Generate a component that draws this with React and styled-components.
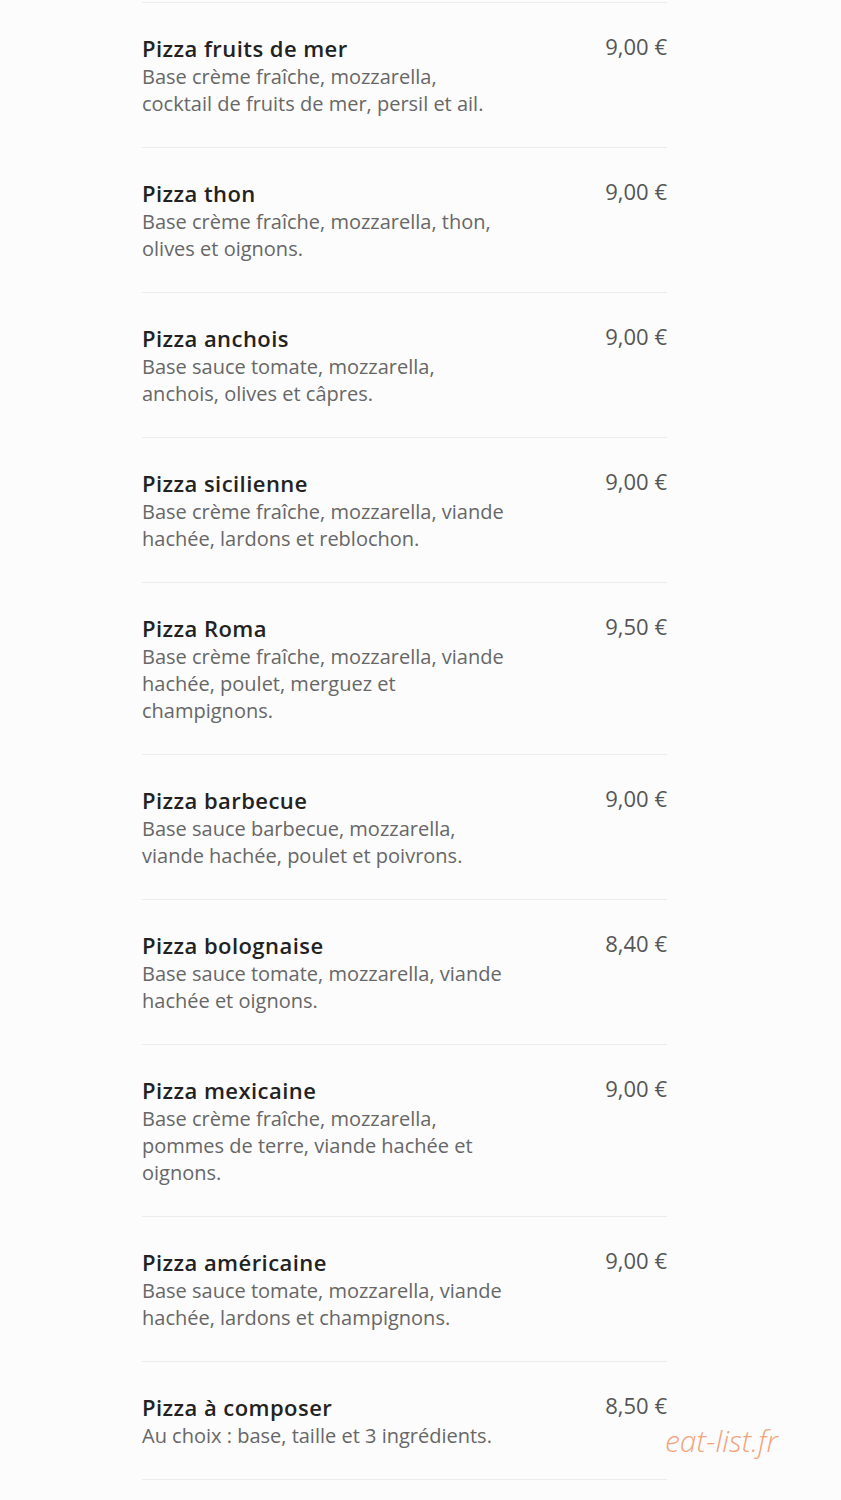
import React from "react";
import styled, { createGlobalStyle } from "styled-components";

const Global = createGlobalStyle`
  html, body { margin: 0; padding: 0; background: #fcfcfc; }
  body { font-family: "Open Sans", "Noto Sans", sans-serif; }
`;

const Page = styled.div`
  position: relative;
  width: 841px;
  min-height: 1500px;
  display: flex;
  justify-content: flex-start;
  padding-left: 142px;
  box-sizing: border-box;
`;

const Menu = styled.ul`
  list-style: none;
  margin: 0;
  padding: 2px 0 0;
  width: 525px;
`;

const Item = styled.li`
  display: flex;
  justify-content: space-between;
  align-items: flex-start;
  border-top: 1px solid #ececec;
  padding: 30px 0 30px;
  &:last-child { border-bottom: 1px solid #ececec; }
`;

const Info = styled.div`
  display: flex;
  flex-direction: column;
`;

const Name = styled.h3`
  margin: 0;
  font-size: 22px;
  line-height: 30px;
  font-weight: 600;
  letter-spacing: 0.45px;
  color: #222;
`;

const Desc = styled.p`
  margin: 0;
  font-size: 20px;
  line-height: 27px;
  color: #676767;
  span { display: block; }
`;

const Price = styled.div`
  font-size: 22px;
  line-height: 26px;
  color: #555;
  white-space: nowrap;
`;

const Watermark = styled.div`
  position: absolute;
  left: 665px;
  top: 1420px;
  font-size: 30px;
  font-style: italic;
  font-weight: 300;
  color: #f2a47c;
`;

const items = [
  ["Pizza fruits de mer", "9,00 €", ["Base crème fraîche, mozzarella,", "cocktail de fruits de mer, persil et ail."]],
  ["Pizza thon", "9,00 €", ["Base crème fraîche, mozzarella, thon,", "olives et oignons."]],
  ["Pizza anchois", "9,00 €", ["Base sauce tomate, mozzarella,", "anchois, olives et câpres."]],
  ["Pizza sicilienne", "9,00 €", ["Base crème fraîche, mozzarella, viande", "hachée, lardons et reblochon."]],
  ["Pizza Roma", "9,50 €", ["Base crème fraîche, mozzarella, viande", "hachée, poulet, merguez et", "champignons."]],
  ["Pizza barbecue", "9,00 €", ["Base sauce barbecue, mozzarella,", "viande hachée, poulet et poivrons."]],
  ["Pizza bolognaise", "8,40 €", ["Base sauce tomate, mozzarella, viande", "hachée et oignons."]],
  ["Pizza mexicaine", "9,00 €", ["Base crème fraîche, mozzarella,", "pommes de terre, viande hachée et", "oignons."]],
  ["Pizza américaine", "9,00 €", ["Base sauce tomate, mozzarella, viande", "hachée, lardons et champignons."]],
  ["Pizza à composer", "8,50 €", ["Au choix : base, taille et 3 ingrédients."]],
];

export default function App() {
  return (
    <>
      <Global />
      <Page>
        <Menu>
          {items.map(([name, price, lines]) => (
            <Item key={name}>
              <Info>
                <Name>{name}</Name>
                <Desc>
                  {lines.map((l) => (
                    <span key={l}>{l}</span>
                  ))}
                </Desc>
              </Info>
              <Price>{price}</Price>
            </Item>
          ))}
        </Menu>
        <Watermark>eat-list.fr</Watermark>
      </Page>
    </>
  );
}
